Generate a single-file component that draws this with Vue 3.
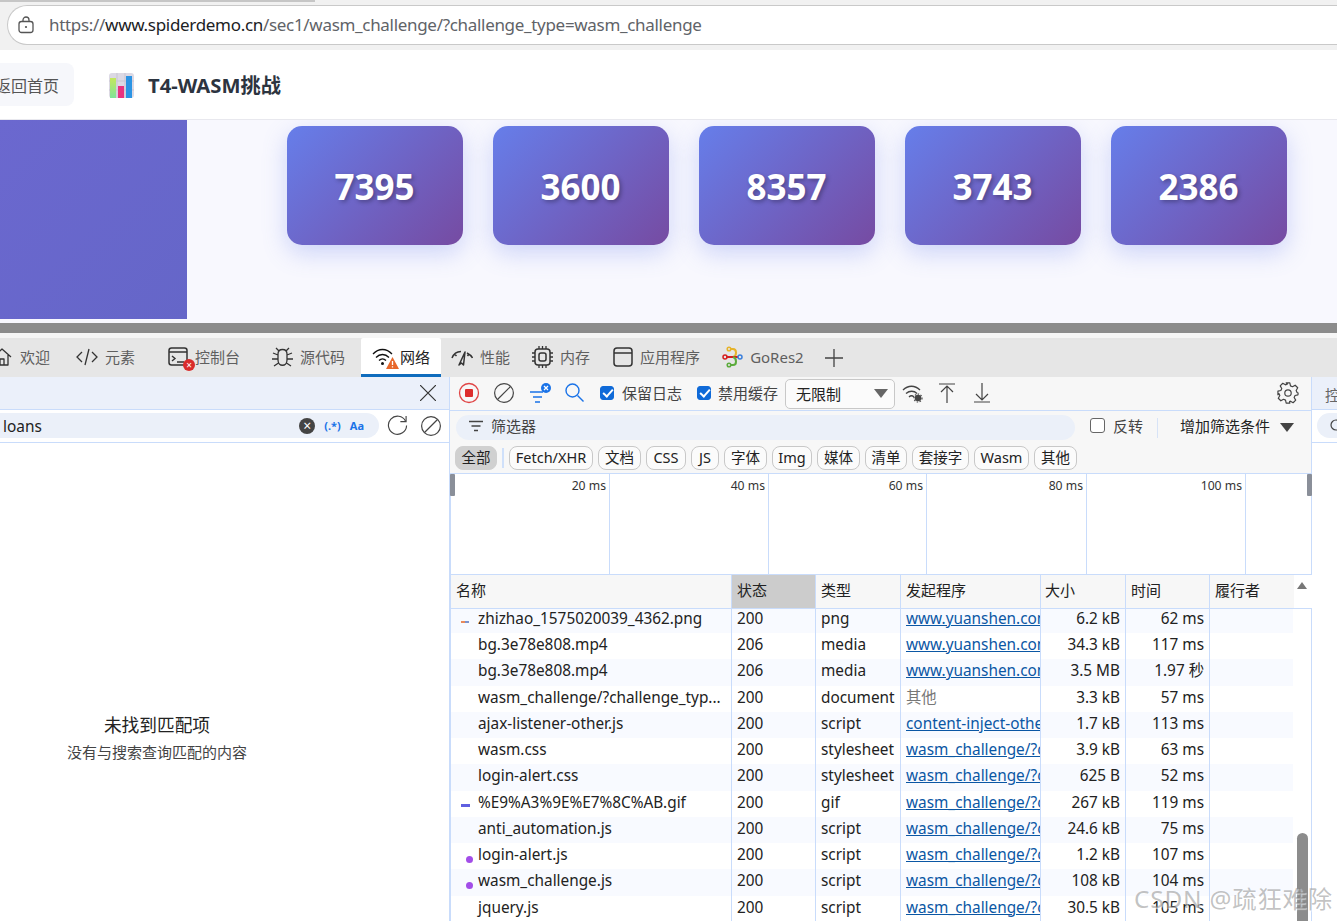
<script setup>
const cards = ['7395', '3600', '8357', '3743', '2386']
const tabs = [
  { id: 'home', label: '欢迎', gap: 0, w: 21 },
  { id: 'code', label: '元素', gap: 26, w: 22 },
  { id: 'console', label: '控制台', gap: 33, w: 20 },
  { id: 'bug', label: '源代码', gap: 32, w: 21 },
  { id: 'wifi', label: '网络', gap: 16, w: 21, active: true },
  { id: 'perf', label: '性能', gap: 10, w: 22 },
  { id: 'mem', label: '内存', gap: 22, w: 21 },
  { id: 'app', label: '应用程序', gap: 23, w: 20 },
  { id: 'gores', label: 'GoRes2', gap: 22, w: 21 }
]
const chips = [
  { t: 'Fetch/XHR', w: 84 }, { t: '文档', w: 43 }, { t: 'CSS', w: 40 }, { t: 'JS', w: 28 },
  { t: '字体', w: 43 }, { t: 'Img', w: 40 }, { t: '媒体', w: 43 }, { t: '清单', w: 42 },
  { t: '套接字', w: 57 }, { t: 'Wasm', w: 55 }, { t: '其他', w: 43 }
]
const marks = [20, 40, 60, 80, 100]
const heads = ['名称', '状态', '类型', '发起程序', '大小', '时间', '履行者']
const yuan = 'www.yuanshen.com'
const wc = 'wasm_challenge/?challenge_type'
const rows = [
  { name: 'zhizhao_1575020039_4362.png', st: 200, type: 'png', init: yuan, size: '6.2 kB', time: '62 ms', icon: 'png' },
  { name: 'bg.3e78e808.mp4', st: 206, type: 'media', init: yuan, size: '34.3 kB', time: '117 ms' },
  { name: 'bg.3e78e808.mp4', st: 206, type: 'media', init: yuan, size: '3.5 MB', time: '1.97 秒' },
  { name: 'wasm_challenge/?challenge_typ...', st: 200, type: 'document', other: '其他', size: '3.3 kB', time: '57 ms' },
  { name: 'ajax-listener-other.js', st: 200, type: 'script', init: 'content-inject-other.js', size: '1.7 kB', time: '113 ms' },
  { name: 'wasm.css', st: 200, type: 'stylesheet', init: wc, size: '3.9 kB', time: '63 ms' },
  { name: 'login-alert.css', st: 200, type: 'stylesheet', init: wc, size: '625 B', time: '52 ms' },
  { name: '%E9%A3%9E%E7%8C%AB.gif', st: 200, type: 'gif', init: wc, size: '267 kB', time: '119 ms', icon: 'gif' },
  { name: 'anti_automation.js', st: 200, type: 'script', init: wc, size: '24.6 kB', time: '75 ms' },
  { name: 'login-alert.js', st: 200, type: 'script', init: wc, size: '1.2 kB', time: '107 ms', icon: 'dot' },
  { name: 'wasm_challenge.js', st: 200, type: 'script', init: wc, size: '108 kB', time: '104 ms', icon: 'dot' },
  { name: 'jquery.js', st: 200, type: 'script', init: wc, size: '30.5 kB', time: '105 ms' }
]
</script>

<template>
  <div class="page">
    <header class="browser">
      <div class="topline"></div>
      <div class="url">
        <svg class="lock" width="18" height="18" viewBox="0 0 18 18" fill="none" stroke="#555" stroke-width="1.3">
          <rect x="2" y="5.5" width="14" height="11" rx="2.5" />
          <path d="M6 5.5V4a3 3 0 0 1 6 0v1.5" />
          <circle cx="9" cy="11" r="1.1" fill="#555" stroke="none" />
        </svg>
        <span class="url-text">https://<b>www.spiderdemo.cn</b>/sec1/wasm_challenge/?challenge_type=wasm_challenge</span>
      </div>
    </header>

    <div class="site-head">
      <div class="back">返回首页</div>
      <svg class="logo" width="25" height="25" viewBox="0 0 25 25">
        <defs>
          <linearGradient id="lg" x1="0" y1="0" x2="0" y2="1">
            <stop offset="0" stop-color="#c4e85c" />
            <stop offset="1" stop-color="#7fe39a" />
          </linearGradient>
        </defs>
        <rect width="25" height="25" rx="3" fill="#dcd9e4" />
        <path d="M0 8h25M0 17h25M8 0v25M16 0v25" stroke="#c9c5d2" stroke-width="1" />
        <rect x="1" y="5" width="6" height="20" fill="url(#lg)" />
        <rect x="9" y="13" width="6" height="12" fill="#e8337f" />
        <rect x="17" y="3" width="6" height="22" fill="#2b94e4" />
      </svg>
      <h1 class="title">T4-WASM挑战</h1>
    </div>

    <section class="stage">
      <div class="block"></div>
      <div class="cards">
        <div v-for="c in cards" :key="c" class="card">{{ c }}</div>
      </div>
    </section>

    <div class="divider"></div>

    <nav class="tabs">
      <div
        v-for="t in tabs"
        :key="t.id"
        class="tab"
        :class="{ active: t.active }"
        :style="{ marginLeft: t.gap + 'px' }"
      >
        <svg :width="t.w" height="22" :viewBox="`0 0 ${t.w} 22`" fill="none" stroke="#333" stroke-width="1.3">
          <template v-if="t.id === 'home'">
            <path d="M1 11 10 3l9 8M4 9v10h12V9M8 19v-6h4v6" stroke-linejoin="round" />
          </template>
          <template v-else-if="t.id === 'code'">
            <path d="M6 6l-5 5 5 5M16 6l5 5-5 5M13 3 9 19" />
          </template>
          <template v-else-if="t.id === 'console'">
            <rect x="1" y="2" width="18" height="17" rx="2.5" stroke-width="1.5" />
            <path d="M1 6h18M4 10l3 2.5L4 15M9 16h7" stroke-width="1.4" />
          </template>
          <template v-else-if="t.id === 'bug'">
            <path d="M6 8c0-6 9-6 9 0v6c0 7-9 7-9 0zM7 5 4 2M14 5l3-3M6 9 1 7M15 9l5-2M6 13H0M15 13h6M6.5 17 2 20M14.5 17l4.500 3" />
          </template>
          <template v-else-if="t.id === 'wifi'">
            <path d="M1 9c5.500-6 13.500-6 19 0M4 12.500c3.800-4 9.200-4 13 0M7 15.500c2-2 5-2 7 0" stroke="#111" />
            <circle cx="10.500" cy="18.500" r="1.500" fill="#111" stroke="none" />
          </template>
          <template v-else-if="t.id === 'perf'">
            <path d="M1 12C2.500 8 6 5.500 10 5.500M16 7c2.500 1.300 4.500 3 5.500 5M3.500 8l2 2M18 8l-1.500 2M8 19l6-13-1.500 13-2-2z" stroke-width="1.5" stroke-linejoin="round" />
          </template>
          <template v-else-if="t.id === 'mem'">
            <rect x="3" y="3" width="15" height="16" rx="3" stroke-width="1.5" />
            <rect x="7" y="7" width="7" height="8" rx="2" stroke-width="1.5" />
            <path d="M0 7h3M0 11h3M0 15h3M18 7h3M18 11h3M18 15h3M7 0v3M10.500 0v3M14 0v3M7 19v3M10.500 19v3M14 19v3" />
          </template>
          <template v-else-if="t.id === 'app'">
            <rect x="1" y="2" width="18" height="18" rx="3" stroke-width="1.5" />
            <path d="M1 7h18" stroke-width="1.500" />
          </template>
          <template v-else>
            <path d="M8 3h3c4 0 4 7 0 8" stroke="#e6b32a" stroke-width="2" />
            <circle cx="7" cy="3" r="1.800" stroke="#e6b32a" stroke-width="1.500" />
            <path d="M4 11h12" stroke="#d61f1f" stroke-width="2" />
            <circle cx="3" cy="11" r="2" stroke="#d61f1f" stroke-width="1.500" />
            <circle cx="18" cy="11" r="2" stroke="#3a7fdc" stroke-width="1.500" />
            <path d="M8 19h3c4 0 4-7 0-8" stroke="#5cab3c" stroke-width="2" />
            <circle cx="7" cy="19" r="1.800" stroke="#5cab3c" stroke-width="1.500" />
          </template>
        </svg>
        <span v-if="t.id === 'console'" class="badge-err">×</span>
        <svg v-if="t.id === 'wifi'" class="badge-warn" width="13" height="12" viewBox="0 0 13 12">
          <path d="M6.500 0 13 12H0z" fill="#e8672a" />
          <path d="M6.500 4v4M6.500 9.200v1.300" stroke="#fff" stroke-width="1.300" />
        </svg>
        <span class="tab-label">{{ t.label }}</span>
      </div>
      <svg class="plus" width="18" height="18" viewBox="0 0 18 18" stroke="#444" stroke-width="1.300"><path d="M9 0v18M0 9h18" /></svg>
    </nav>

    <main class="panes">
      <aside class="search">
        <div class="search-top">
          <svg width="16" height="16" viewBox="0 0 16 16" stroke="#333" stroke-width="1.200"><path d="M0 0l16 16M16 0 0 16" /></svg>
        </div>
        <div class="search-row">
          <div class="search-pill">
            <span class="loans">loans</span>
            <span class="clear-x">×</span>
            <span class="regex">(.*)</span>
            <span class="case">Aa</span>
          </div>
          <svg class="s-refresh" width="21" height="21" viewBox="0 0 22 22" fill="none" stroke="#444" stroke-width="1.200">
            <path d="M19.500 6.500A9.500 9.500 0 1 0 20.500 11" />
            <path d="M20 1v6h-6" />
          </svg>
          <svg class="s-block" width="20" height="20" viewBox="0 0 20 20" fill="none" stroke="#444" stroke-width="1.200">
            <circle cx="10" cy="10" r="9.400" />
            <path d="M3.500 16.500l13-13" />
          </svg>
        </div>
        <div class="empty">
          <div class="empty-title">未找到匹配项</div>
          <div class="empty-sub">没有与搜索查询匹配的内容</div>
        </div>
      </aside>

      <section class="network">
        <div class="toolbar">
          <svg class="t-rec" width="22" height="22" viewBox="0 0 22 22">
            <circle cx="11" cy="11" r="9.500" fill="none" stroke="#e04545" stroke-width="1.300" />
            <rect x="7" y="7" width="8" height="8" rx="1" fill="#dd2c2c" />
          </svg>
          <svg class="t-clear" width="20" height="20" viewBox="0 0 20 20" fill="none" stroke="#444" stroke-width="1.200">
            <circle cx="10" cy="10" r="9.400" />
            <path d="M3.500 16.500l13-13" />
          </svg>
          <svg class="t-filter" width="22" height="22" viewBox="0 0 22 22" fill="none" stroke="#1a73e8" stroke-width="1.300">
            <path d="M0 10h13M3 15h9M5 20h5" />
            <circle cx="16" cy="6" r="5" fill="#1a73e8" stroke="none" />
            <path d="M14 4l4 4M18 4l-4 4" stroke="#fff" stroke-width="1.300" />
          </svg>
          <svg class="t-search" width="19" height="19" viewBox="0 0 19 19" fill="none" stroke="#1a73e8" stroke-width="1.400">
            <circle cx="7.500" cy="7.500" r="6.500" />
            <path d="M12.500 12.500l6 6" />
          </svg>
          <label class="chk first"><span class="box on"></span>保留日志</label>
          <label class="chk second"><span class="box on"></span>禁用缓存</label>
          <div class="select">无限制<i class="tri"></i></div>
          <svg class="t-wifi" width="22" height="20" viewBox="0 0 22 20" fill="none" stroke="#444" stroke-width="1.300">
            <path d="M1 7c5-5 12-5 17 0M4 10.500c3.500-3 8-3 11 0M7 14c1.500-1.500 3.500-1.500 5 0" />
            <circle cx="16" cy="15" r="3.200" fill="#444" stroke="none" />
            <circle cx="16" cy="15" r="4" fill="none" stroke="#444" stroke-width="1.200" stroke-dasharray="1.500 1.500" />
          </svg>
          <svg class="t-up" width="16" height="20" viewBox="0 0 16 20" fill="none" stroke="#444" stroke-width="1.200">
            <path d="M0 1h16M8 20V3M2 9l6-6 6 6" />
          </svg>
          <svg class="t-down" width="16" height="20" viewBox="0 0 16 20" fill="none" stroke="#444" stroke-width="1.200">
            <path d="M0 19h16M8 0v17M2 11l6 6 6-6" />
          </svg>
          <svg class="t-gear" width="22" height="22" viewBox="0 0 24 24" fill="none" stroke="#444" stroke-width="1.300">
            <circle cx="12" cy="12" r="3.500" />
            <path d="M10 1h4l.7 3.200 2.200 1 2.900-1.700 2.800 2.800-1.700 2.900 1 2.200L23 12v0l-.1 2-3.200.7-1 2.200 1.700 2.900-2.800 2.800-2.900-1.700-1 .4L14 23h-4l-.7-3.200-2.200-1-2.900 1.700-2.800-2.800 1.700-2.900-1-2.200L1 14v-4l3.200-.7 1-2.200-1.700-2.900 2.800-2.800 2.900 1.700 2.200-1z" stroke-linejoin="round" />
          </svg>
        </div>

        <div class="filter-row">
          <div class="filter-pill">
            <svg width="14" height="12" viewBox="0 0 14 12" stroke="#444" stroke-width="1.300"><path d="M0 1.500h14M2.500 6h9M5 10.500h4" /></svg>
            <span>筛选器</span>
          </div>
          <label class="chk invert"><span class="box"></span>反转</label>
          <span class="vline"></span>
          <span class="more">增加筛选条件</span>
          <i class="tri dark"></i>
        </div>

        <div class="chips">
          <span class="chip all">全部</span>
          <span class="chip-sep"></span>
          <span v-for="c in chips" :key="c.t" class="chip" :style="{ width: c.w + 'px' }">{{ c.t }}</span>
        </div>

        <div class="overview">
          <span class="grip left"></span>
          <div v-for="m in marks" :key="m" class="mark">{{ m }} ms</div>
          <span class="grip right"></span>
        </div>

        <div class="table">
          <div class="thead">
            <div v-for="(h, i) in heads" :key="h" class="th" :class="{ sorted: i === 1 }">{{ h }}</div>
            <div class="sb-head"><i class="sb-arrow"></i></div>
          </div>
          <div class="tbody">
            <div class="rows">
              <div v-for="(r, i) in rows" :key="i" class="tr">
                <div class="td name">
                  <i v-if="r.icon" class="ri" :class="r.icon"></i>
                  {{ r.name }}
                </div>
                <div class="td">{{ r.st }}</div>
                <div class="td">{{ r.type }}</div>
                <div class="td init">
                  <a v-if="r.init">{{ r.init }}</a>
                  <span v-else class="muted">{{ r.other }}</span>
                </div>
                <div class="td num">{{ r.size }}</div>
                <div class="td num">{{ r.time }}</div>
                <div class="td"></div>
              </div>
            </div>
            <div class="sb-track"><i class="sb-thumb"></i></div>
          </div>
        </div>
      </section>

      <aside class="drawer">
        <div class="drawer-top"><span>控制台</span></div>
        <div class="drawer-row">
          <div class="drawer-pill">
            <svg width="14" height="14" viewBox="0 0 14 14" fill="none" stroke="#444" stroke-width="1.200"><circle cx="6" cy="6" r="5" /></svg>
          </div>
        </div>
      </aside>

      <div class="watermark">CSDN @疏狂难除</div>
    </main>
  </div>
</template>

<style scoped>
.page {
  --ui: "Noto Sans", "Noto Sans CJK SC", sans-serif;
  --line: #c9dcfb;
  width: 1337px;
  height: 921px;
  overflow: hidden;
  display: flex;
  flex-direction: column;
  font-family: var(--ui);
  color: #222;
  background: #fff;
}
.browser {
  height: 50px;
  flex: none;
  background: #f1f1f1;
  position: relative;
  padding: 5px 0 0 7px;
  box-sizing: border-box;
}
.topline {
  position: absolute;
  left: 0;
  top: 0;
  width: 315px;
  height: 2px;
  background: #c6c6c6;
}
.url {
  height: 40px;
  box-sizing: border-box;
  border: 1px solid #c9c9c9;
  border-right: none;
  border-radius: 20px 0 0 20px;
  background: #fff;
  display: flex;
  align-items: center;
  padding: 0 0 1px 9px;
}
.lock { flex: none; }
.url-text {
  margin-left: 14px;
  font-size: 17px;
  letter-spacing: -.31px;
  color: #5f6368;
  white-space: nowrap;
}
.url-text b { font-weight: 400; color: #202124; }
.site-head {
  height: 70px;
  flex: none;
  box-sizing: border-box;
  border-bottom: 1px solid #e8e8ee;
  background: #fff;
  display: flex;
  align-items: center;
}
.back {
  width: 74px;
  height: 43px;
  background: #f6f7fb;
  border-radius: 0 8px 8px 0;
  display: flex;
  align-items: center;
  justify-content: flex-end;
  padding-right: 15px;
  box-sizing: border-box;
  font-size: 16px;
  color: #555;
  white-space: nowrap;
  overflow: hidden;
}
.logo { margin: 2px 0 0 35px; flex: none; }
.title {
  margin: 0 0 0 14px;
  font-size: 20.200px;
  font-weight: 700;
  color: #2c3440;
}
.stage {
  height: 203px;
  flex: none;
  background: #f8f8fe;
  display: flex;
  align-items: flex-start;
  overflow: hidden;
}
.block {
  width: 187px;
  height: 199px;
  flex: none;
  background: linear-gradient(135deg, #6b68cf, #6566c8);
}
.cards {
  display: flex;
  gap: 30px;
  margin: 6px 0 0 99.500px;
}
.card {
  width: 176px;
  height: 119px;
  border-radius: 15px;
  background: linear-gradient(135deg, #667eea, #764ba2);
  box-shadow: 0 8px 25px rgba(102, 126, 234, .3);
  color: #fff;
  font-size: 35px;
  font-weight: 700;
  display: flex;
  align-items: center;
  justify-content: center;
  padding-top: 1px;
  box-sizing: border-box;
  text-shadow: 2px 2px 4px rgba(0, 0, 0, .3);
}
.divider {
  height: 15px;
  flex: none;
  box-sizing: border-box;
  border-top: 10px solid #8c8c8c;
  background: #f6f6f6;
}
.tabs {
  height: 39px;
  flex: none;
  background: #e6e6e6;
  display: flex;
  align-items: stretch;
  font-size: 15px;
  color: #5f5f5f;
  margin-left: -8px;
  white-space: nowrap;
}
.tab {
  display: flex;
  align-items: center;
  gap: 7px;
  position: relative;
  flex: none;
  box-sizing: border-box;
  padding-bottom: 2px;
}
.tab.active {
  background: #fff;
  color: #222;
  padding: 0 11px;
  border-bottom: 3px solid #0f6cbd;
  border-radius: 2px 2px 0 0;
}
.tab-label { display: block; }
.badge-err {
  position: absolute;
  left: 15px;
  top: 21px;
  width: 12px;
  height: 12px;
  border-radius: 50%;
  background: #d92c2c;
  color: #fff;
  font-size: 10px;
  line-height: 12px;
  text-align: center;
}
.badge-warn { position: absolute; left: 25px; top: 19px; }
.plus { align-self: center; margin-left: 21px; }
.panes {
  flex: 1;
  min-height: 0;
  display: flex;
  position: relative;
}
.search {
  width: 450px;
  flex: none;
  display: flex;
  flex-direction: column;
  box-sizing: border-box;
  border-right: 1px solid var(--line);
}
.search-top {
  height: 33px;
  flex: none;
  background: #ebf0fa;
  border-bottom: 1px solid var(--line);
  box-sizing: border-box;
  display: flex;
  align-items: center;
  justify-content: flex-end;
  padding-right: 13px;
}
.search-row {
  height: 33px;
  flex: none;
  box-sizing: border-box;
  border-bottom: 1px solid var(--line);
  display: flex;
  align-items: center;
  padding-bottom: 1px;
}
.search-pill {
  width: 379px;
  height: 25px;
  background: #ebf0f9;
  border-radius: 0 13px 13px 0;
  display: flex;
  align-items: center;
  flex: none;
}
.s-refresh { margin-left: 8px; flex: none; }
.s-block { margin-left: 13px; flex: none; }
.loans { margin-left: 3px; font-size: 15.400px; flex: 1; padding-top: 2px; }
.clear-x {
  width: 16px;
  height: 16px;
  border-radius: 50%;
  background: #444;
  color: #fff;
  font-size: 14px;
  line-height: 15px;
  text-align: center;
}
.regex, .case { color: #1a73e8; font-size: 11px; font-weight: 700; }
.regex { margin-left: 9px; }
.case { margin: 0 15px 0 9px; }
.empty {
  flex: 1;
  display: flex;
  flex-direction: column;
  align-items: center;
  padding: 271px 0 0 0;
  margin-right: 135px;
}
.empty-title { font-size: 17.700px; line-height: 22px; color: #222; }
.empty-sub { font-size: 15px; line-height: 22px; color: #444; margin-top: 5px; }
.network {
  width: 862px;
  flex: none;
  display: flex;
  flex-direction: column;
  min-width: 0;
  background: #f7f7f7;
}
.toolbar {
  height: 34px;
  flex: none;
  box-sizing: border-box;
  border-bottom: 1px solid var(--line);
  display: flex;
  align-items: center;
  font-size: 15px;
  color: #444;
  padding: 0 0 2px 8px;
}
.toolbar > svg { flex: none; }
.t-clear { margin-left: 14px; }
.t-filter { margin-left: 16px; }
.t-search { margin-left: 13px; }
.chk {
  display: flex;
  align-items: center;
  gap: 8px;
  white-space: nowrap;
}
.chk.first { margin-left: 16px; }
.chk.second { margin-left: 15px; gap: 7px; }
.box {
  width: 14px;
  height: 14px;
  border-radius: 3px;
  border: 1px solid #666;
  box-sizing: border-box;
  background: #fff;
  position: relative;
}
.box.on { background: #0f6ad8; border-color: #0f6ad8; }
.box.on::after {
  content: "";
  position: absolute;
  left: 3.500px;
  top: .5px;
  width: 4px;
  height: 8px;
  border: solid #fff;
  border-width: 0 2px 2px 0;
  transform: rotate(42deg);
}
.select {
  width: 110px;
  height: 30px;
  margin: 2px 0 0 7px;
  box-sizing: border-box;
  border: 1px solid #c8c8c8;
  border-radius: 5px;
  background: #fbfbfb;
  padding: 0 6px 1px 10px;
  display: flex;
  align-items: center;
  justify-content: space-between;
  color: #222;
  flex: none;
}
.tri {
  display: block;
  width: 0;
  height: 0;
  border: 7px solid transparent;
  border-top: 9px solid #666;
  border-bottom: 0;
}
.tri.dark { border-top-color: #444; margin-left: 10px; }
.t-wifi { margin-left: 7px; }
.t-up { margin-left: 15px; }
.t-down { margin-left: 19px; }
.t-gear { margin-left: 287px; }
.filter-row {
  height: 33px;
  flex: none;
  box-sizing: border-box;
  display: flex;
  align-items: center;
  padding: 0 0 0 6px;
  font-size: 15px;
  color: #444;
}
.filter-pill {
  width: 619px;
  height: 25px;
  border-radius: 13px;
  background: #ebf0f9;
  display: flex;
  align-items: center;
  gap: 8px;
  padding: 0 0 4px 13px;
  box-sizing: border-box;
  flex: none;
}
.chk.invert { margin: 0 0 4px 15px; }
.invert .box { width: 15px; height: 15px; }
.vline { width: 1px; height: 20px; background: #d7e3f7; margin-left: 14px; }
.more { margin: 0 0 4px 22px; color: #222; white-space: nowrap; }
.chips {
  height: 30px;
  flex: none;
  box-sizing: border-box;
  display: flex;
  align-items: flex-start;
  gap: 5px;
  padding: 2px 0 0 5px;
  border-bottom: 1px solid var(--line);
  font-size: 14.500px;
  color: #222;
}
.chip {
  height: 24px;
  box-sizing: border-box;
  border: 1px solid #c8c8c8;
  border-radius: 8px;
  line-height: 21px;
  text-align: center;
  white-space: nowrap;
  background: #fbfbfb;
  flex: none;
}
.chip.all { width: 42px; background: #d0d0d0; border-color: #d0d0d0; }
.chip-sep { width: 2px; height: 20px; margin: 2px 0 0 0; background: #cfe0fa; }
.overview {
  height: 101px;
  flex: none;
  display: grid;
  grid-template-columns: 159px 159px 158px 160px 159px 1fr;
  background: #fff;
  position: relative;
  box-sizing: border-box;
  border-left: 1px solid var(--line);
  border-right: 1px solid var(--line);
  border-bottom: 1px solid var(--line);
  font-size: 12.200px;
  color: #333;
}
.mark {
  border-right: 1px solid var(--line);
  text-align: right;
  padding: 3px 3px 0 0;
  box-sizing: border-box;
}
.grip {
  position: absolute;
  top: 0;
  width: 5px;
  height: 22px;
  background: #8a8f99;
  border-radius: 1px;
}
.grip.left { left: -1px; }
.grip.right { right: -1px; }
.table {
  flex: 1;
  min-height: 0;
  display: flex;
  flex-direction: column;
  background: #fff;
  border-left: 1px solid var(--line);
  border-right: 1px solid var(--line);
  box-sizing: border-box;
}
.thead, .tr {
  display: grid;
  grid-template-columns: 281px 84px 85px 140px 85px 84px 84px;
}
.thead {
  height: 34px;
  flex: none;
  box-sizing: border-box;
  border-bottom: 1px solid var(--line);
  background: #f7f7f7;
  font-size: 15px;
  position: relative;
  grid-template-columns: 281px 84px 85px 140px 85px 84px 84px 19px;
}
.th {
  border-right: 1px solid var(--line);
  padding-left: 5px;
  line-height: 30px;
  box-sizing: border-box;
  color: #222;
}
.th:nth-child(7) { border-right: 0; }
.th:nth-child(5) { padding-left: 4px; }
.th.sorted { background: #cccccc; }
.sb-head { position: relative; background: #fff; }
.sb-arrow {
  position: absolute;
  left: 3px;
  top: 7px;
  width: 0;
  height: 0;
  border: 5px solid transparent;
  border-bottom: 7px solid #777;
  border-top: 0;
}
.tbody {
  flex: 1;
  min-height: 0;
  display: flex;
  overflow: hidden;
  position: relative;
}
.rows {
  width: 842px;
  flex: none;
  margin-top: -2.250px;
}
.tr {
  height: 26.250px;
  font-size: 15.350px;
  color: #222;
}
.tr:nth-child(odd) { background: #f8faff; }
.td {
  border-right: 1px solid var(--line);
  padding-left: 5px;
  line-height: 22.500px;
  overflow: hidden;
  white-space: nowrap;
  box-sizing: border-box;
}
.td:last-child { border-right: 0; }
.td.name { padding-left: 27px; position: relative; }
.td.num { text-align: right; padding: 0 5px 0 0; }
.init a { color: #0b57a4; text-decoration: underline; }
.muted { color: #777; }
.ri { position: absolute; display: block; }
.ri.png { left: 10px; top: 14px; width: 8px; height: 2px; background: linear-gradient(90deg, #e98a5a 50%, #7d93cc 50%); }
.ri.gif { left: 10px; top: 13px; width: 9px; height: 3px; background: #5f5fe0; }
.ri.dot { left: 15px; top: 13px; width: 7px; height: 7px; border-radius: 50%; background: #a24de8; }
.sb-track { flex: 1; background: #fff; position: relative; }
.sb-thumb {
  position: absolute;
  left: 4px;
  top: 224px;
  width: 11px;
  height: 120px;
  border-radius: 6px;
  background: #8c8c8c;
}
.drawer { flex: 1; min-width: 0; overflow: hidden; border-left: 1px solid var(--line); margin-left: -1px; }
.drawer-top {
  height: 33px;
  box-sizing: border-box;
  background: #ebf0fa;
  border-bottom: 1px solid var(--line);
  padding-left: 13px;
  font-size: 15px;
  color: #666;
  white-space: nowrap;
  line-height: 36px;
}
.drawer-row {
  height: 33px;
  box-sizing: border-box;
  border-bottom: 1px solid var(--line);
  padding: 3px 0 0 5px;
}
.drawer-pill {
  width: 60px;
  height: 25px;
  border-radius: 13px 0 0 13px;
  background: #ebf0f9;
  display: flex;
  align-items: center;
  padding-left: 13px;
  box-sizing: border-box;
}
.watermark {
  position: absolute;
  right: 4px;
  bottom: 6px;
  font-size: 24.400px;
  letter-spacing: .8px;
  color: rgba(120, 120, 120, .45);
  text-shadow: 1px 1px 1px rgba(255, 255, 255, .6);
  white-space: nowrap;
}
</style>
